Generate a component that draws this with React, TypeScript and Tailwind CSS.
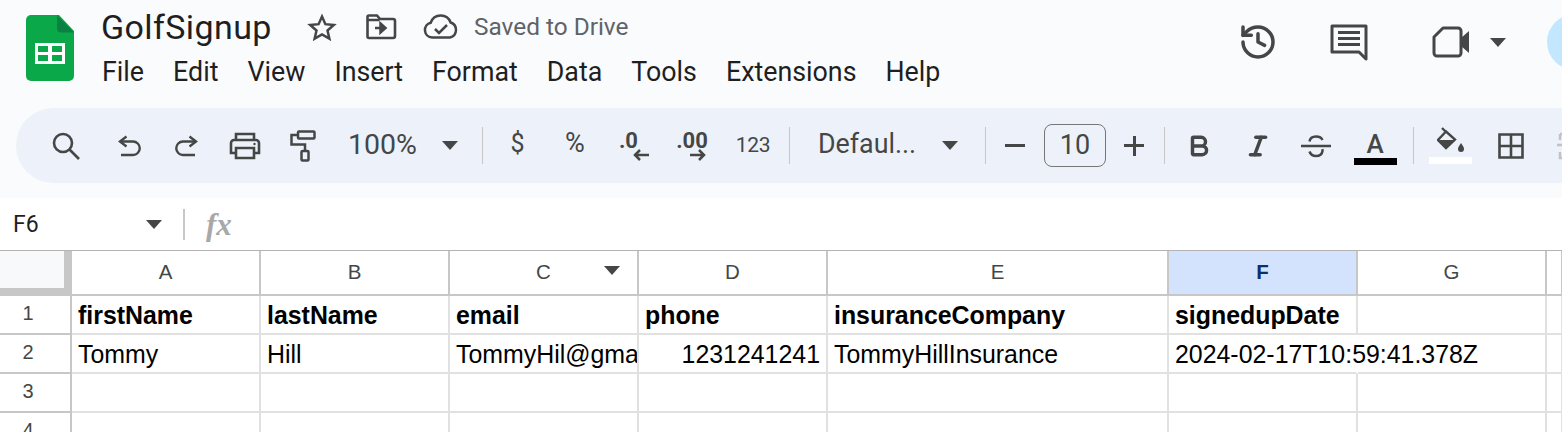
import React from 'react';
import { Bold, History, Italic } from 'lucide-react';

const Caret = ({ className = '' }: { className?: string }) => (
  <svg width="16" height="9" viewBox="0 0 16 9" className={className}><path d="M0 0h16L8 9z" fill="#444746" /></svg>
);

const Divider = ({ className = '' }: { className?: string }) => <div className={`w-[1px] h-[37px] bg-[#c7c7c7] shrink-0 ${className}`} />;

const SheetsLogo = () => (
  <svg width="48" height="66" viewBox="0 0 48 66">
    <path d="M5 0h28l15 16v45a5 5 0 0 1-5 5H5a5 5 0 0 1-5-5V5a5 5 0 0 1 5-5z" fill="#0ba84a" />
    <path d="M31 0l17 17.500H35a4 4 0 0 1-4-4z" fill="#0a8043" />
    <path d="M9 28h30v21H9zM12 31v6h10v-6zm14 0v6h10v-6zM12 40v6h10v-6zm14 0v6h10v-6z" fill="#fff" fillRule="evenodd" />
  </svg>
);

const StarIcon = () => (
  <svg width="30" height="28" viewBox="0 0 30 28" fill="none" stroke="#444746" strokeWidth="2.500">
    <path d="M15 3.500l3.400 7.700 8.400.8-6.300 5.500 1.900 8.200L15 21.400l-7.400 4.300 1.900-8.200L3.200 12l8.400-.8z" />
  </svg>
);

const FolderMove = () => (
  <svg width="32" height="26" viewBox="0 0 32 26" fill="none">
    <path d="M2.500 5.500V3a1.500 1.500 0 0 1 1.500-1.500h8l3 3.500h13a2 2 0 0 1 2 2v15a2 2 0 0 1-2 2H4a1.500 1.500 0 0 1-1.500-1.500z" stroke="#444746" strokeWidth="2.600" />
    <path d="M2.500 6h12" stroke="#444746" strokeWidth="2.500" />
    <path d="M10 14h8M15.500 9.500l5 4.500-5 4.500z" stroke="#444746" strokeWidth="2.500" fill="#444746" />
  </svg>
);

const CloudCheck = () => (
  <svg width="36" height="26" viewBox="0 0 36 26" fill="none" stroke="#444746" strokeWidth="2.500">
    <path d="M9 23.500a7.500 7.500 0 0 1-1.200-14.800A10.500 10.500 0 0 1 27.600 8.500 7.800 7.800 0 0 1 27 23.500z" />
    <path d="M12 15l4 4 8-8" />
  </svg>
);

const CommentIcon = () => (
  <svg width="38" height="38" viewBox="0 0 38 38" fill="none">
    <path d="M2 2h34v33l-7-7H2z" stroke="#444746" strokeWidth="3" strokeLinejoin="round" />
    <path d="M8 8.500h22M8 14.500h22M8 20.500h22" stroke="#444746" strokeWidth="3" />
  </svg>
);

const MeetIcon = () => (
  <svg width="38" height="32" viewBox="0 0 38 32" fill="none">
    <path d="M11 2h15a3 3 0 0 1 3 3v22a3 3 0 0 1-3 3H5a3 3 0 0 1-3-3V11z" stroke="#444746" strokeWidth="3" strokeLinejoin="round" />
    <path d="M29 12l8-7v22l-8-7z" fill="#444746" />
  </svg>
);

const SearchIcon = () => (
  <svg width="28" height="28" viewBox="0 0 28 28" fill="none" stroke="#444746" strokeWidth="2.600">
    <circle cx="11" cy="11" r="9" />
    <path d="M17.500 17.500L27 27" />
  </svg>
);

const UndoIcon = ({ flip = false }: { flip?: boolean }) => (
  <svg width="24" height="22" viewBox="0 0 24 22" fill="none" stroke="#444746" strokeWidth="2.400" className={flip ? '-scale-x-100' : ''}>
    <path d="M9.500 11.500L3 6.500 9.500 1.500" />
    <path d="M3 6.500h13a6 6 0 0 1 0 13.500H4" />
  </svg>
);

const PrintIcon = () => (
  <svg width="32" height="28" viewBox="0 0 32 28" fill="none" stroke="#444746" strokeWidth="2.600">
    <path d="M7 8V2h18v6" />
    <path d="M7 21H2V11a3 3 0 0 1 3-3h22a3 3 0 0 1 3 3v10h-5" />
    <path d="M7 16h18v10H7z" />
    <circle cx="25.500" cy="12" r="1.200" fill="#444746" stroke="none" />
  </svg>
);

const RollerIcon = () => (
  <svg width="26" height="32" viewBox="0 0 26 32" fill="none" stroke="#444746" strokeWidth="2.500">
    <rect x="8" y="1.500" width="16.500" height="7" rx="1" />
    <path d="M8 5H1.500v9.500H15V21" />
    <rect x="11.500" y="21" width="7" height="9.500" rx="1" />
  </svg>
);

const ArrowSmall = ({ left = false }: { left?: boolean }) => (
  <svg width="16" height="12" viewBox="0 0 16 12" fill="none" stroke="#444746" strokeWidth="2.500" className={left ? '-scale-x-100' : ''}>
    <path d="M0 6h14M9 1l5 5-5 5" />
  </svg>
);

const StrikeIcon = () => (
  <svg width="30" height="26" viewBox="0 0 30 26" fill="none" stroke="#444746" strokeWidth="2.500">
    <path d="M0 13h30" />
    <path d="M8.500 8.500C9 5 12 3.500 15 3.500s5.500 1 6.500 3.500" />
    <path d="M8.500 18.500C9.500 21.500 12 23 15 23s6-1.500 6.500-5c.1-.6 0-1.200-.2-1.800" />
  </svg>
);

const FillIcon = () => (
  <svg width="28" height="28" viewBox="0 0 28 28" fill="none">
    <path d="M5 1l4 4M9 4.500L1 13l8 8 9-8.500z" stroke="#444746" strokeWidth="2.400" />
    <path d="M2 13h15l-8 8z" fill="#444746" />
    <path d="M24 16c2 3 3 4.500 3 6a3 3 0 0 1-6 0c0-1.500 1-3 3-6z" fill="#444746" />
  </svg>
);

const BordersIcon = () => (
  <svg width="26" height="26" viewBox="0 0 26 26" fill="none" stroke="#444746" strokeWidth="2.600">
    <path d="M1.500 1.500h23v23h-23zM13 1.500v23M1.500 13h23" />
  </svg>
);

const MergeStub = () => (
  <svg width="12" height="28" viewBox="0 0 12 28" fill="none" stroke="#bfc2c7" strokeWidth="2.500">
    <path d="M3 2h9M3 2v6M3 20v6h9M0 13h12" />
  </svg>
);

const columns = ['A', 'B', 'C', 'D', 'E', 'F', 'G', ''];
const menus = ['File', 'Edit', 'View', 'Insert', 'Format', 'Data', 'Tools', 'Extensions', 'Help'];
const rows: { label: string; cells: string[]; bold?: boolean }[] = [
  { label: '1', bold: true, cells: ['firstName', 'lastName', 'email', 'phone', 'insuranceCompany', 'signedupDate', '', ''] },
  { label: '2', cells: ['Tommy', 'Hill', 'TommyHil@gmail.com', '1231241241', 'TommyHillInsurance', '2024-02-17T10:59:41.378Z', '', ''] },
  { label: '3', cells: ['', '', '', '', '', '', '', ''] },
  { label: '4', cells: ['', '', '', '', '', '', '', ''] },
];

const ToolBtn = ({ w, children }: { w: string; children: React.ReactNode }) => (
  <div className={`${w} shrink-0 flex items-center justify-center`}>{children}</div>
);

export default function App() {
  return (
    <div className="w-[1562px] h-[432px] overflow-hidden bg-[#f9fbfd] font-['Roboto',sans-serif]">
      {/* title bar */}
      <header className="h-[108px] flex items-start">
        <div className="w-[101px] shrink-0 pl-[26px] pt-[15px]"><SheetsLogo /></div>
        <div className="w-[1125px] shrink-0">
          <div className="h-[54px] flex items-center">
            <span className="w-[192px] text-[34px] tracking-[0.4px] leading-none text-[#1f1f1f]">GolfSignup</span>
            <div className="w-[58px] flex justify-center"><StarIcon /></div>
            <div className="w-[60px] flex justify-center"><FolderMove /></div>
            <div className="w-[60px] flex justify-center"><CloudCheck /></div>
            <span className="ml-[3px] text-[24.400px] leading-none text-[#5f6368]">Saved to Drive</span>
          </div>
          <nav className="flex gap-[29px] text-[26.800px] leading-none text-[#1f1f1f] pt-[5px] pl-[1px]">
            {menus.map(m => <span key={m}>{m}</span>)}
          </nav>
        </div>
        <div className="flex items-center h-[84px] shrink-0">
          <div className="w-[64px] flex justify-center"><History size={40} color="#444746" strokeWidth={2.100} /></div>
          <div className="w-[76px] ml-[21px] flex justify-center pt-[1px]"><CommentIcon /></div>
          <div className="w-[74px] ml-[27px] flex justify-center"><MeetIcon /></div>
          <Caret className="mr-[41px] ml-[2px]" />
          <div className="w-[56px] h-[56px] rounded-full bg-[#c2e7ff] shrink-0" />
        </div>
      </header>

      {/* toolbar pill */}
      <div className="ml-4 h-[75px] rounded-l-[38px] bg-[#edf2fa] flex items-center pl-[21px] text-[#444746] overflow-hidden">
        <ToolBtn w="w-[58px]"><SearchIcon /></ToolBtn>
        <ToolBtn w="w-[58px] ml-[5px]"><UndoIcon /></ToolBtn>
        <ToolBtn w="w-[58px]"><UndoIcon flip /></ToolBtn>
        <ToolBtn w="w-[58px]"><PrintIcon /></ToolBtn>
        <ToolBtn w="w-[58px]"><RollerIcon /></ToolBtn>
        <div className="w-[150px] shrink-0 flex items-center pl-[16px] text-[28.500px] leading-none">
          <span className="w-[94px]">100%</span>
          <Caret />
        </div>
        <Divider />
        <ToolBtn w="w-[61px] ml-[4px] text-[25px] pb-[4px]">$</ToolBtn>
        <ToolBtn w="w-[54px] text-[27px] pb-[4px]">%</ToolBtn>
        <div className="w-[60px] shrink-0 flex flex-col items-center pl-[3px]">
          <span className="text-[22px] leading-[20px] font-bold -ml-[10px]">.0</span>
          <div className="ml-[14px] h-[12px] -mt-[2px]"><ArrowSmall left /></div>
        </div>
        <div className="w-[60px] shrink-0 flex flex-col items-center">
          <span className="text-[22px] leading-[20px] font-bold">.00</span>
          <div className="ml-[12px] h-[12px] -mt-[2px]"><ArrowSmall /></div>
        </div>
        <ToolBtn w="w-[62px] text-[21px] tracking-[-0.3px]">123</ToolBtn>
        <Divider className="ml-[5px]" />
        <div className="w-[195px] shrink-0 flex items-center pl-[28px] text-[26.800px] leading-none pb-[3px]">
          <span className="w-[124px]">Defaul...</span>
          <Caret className="mt-[3px]" />
        </div>
        <Divider />
        <div className="w-[58px] shrink-0 flex justify-center"><div className="w-[20px] h-[3px] bg-[#444746]" /></div>
        <div className="w-[62px] h-[43px] shrink-0 border border-[#747775] rounded-[8px] flex items-center justify-center text-[27px] pb-[1px]">10</div>
        <div className="w-[58px] shrink-0 flex justify-center text-[#444746] pr-[2px]">
          <div className="relative w-[20px] h-[20px]">
            <div className="absolute left-0 top-[8.500px] w-[20px] h-[3px] bg-[#444746]" />
            <div className="absolute left-[8.500px] top-0 w-[3px] h-[20px] bg-[#444746]" />
          </div>
        </div>
        <Divider />
        <ToolBtn w="w-[68px]"><Bold size={26} strokeWidth={3.200} /></ToolBtn>
        <ToolBtn w="w-[50px]"><Italic size={26} strokeWidth={3.200} /></ToolBtn>
        <ToolBtn w="w-[66px]"><StrikeIcon /></ToolBtn>
        <div className="w-[52px] shrink-0 flex flex-col items-center pt-[4px]">
          <span className="text-[26px] leading-[27px] font-medium">A</span>
          <div className="w-[43px] h-[7px] bg-black" />
        </div>
        <Divider className="ml-[12px]" />
        <div className="w-[73px] shrink-0 flex flex-col items-center">
          <FillIcon />
          <div className="w-[43px] h-[7px] bg-white mt-[2px]" />
        </div>
        <ToolBtn w="w-[48px]"><BordersIcon /></ToolBtn>
        <div className="ml-[22px] shrink-0"><MergeStub /></div>
      </div>

      {/* name box + formula bar */}
      <div className="mt-[15px] h-[52px] bg-white flex items-center">
        <span className="w-[146px] shrink-0 pl-[13px] text-[23px] leading-none text-[#1f1f1f]">F6</span>
        <Caret className="mt-[1px]" />
        <div className="ml-[21px] w-[2px] h-[31px] bg-[#c7c7c7] shrink-0" />
        <span className="ml-[21px] font-['Liberation_Serif',serif] italic font-bold text-[31px] leading-none text-[#a8a8a8]">fx</span>
      </div>

      {/* grid */}
      <div className="bg-white border-t border-[#b3b3b3] grid grid-cols-[72px_189px_189px_189px_189px_341px_189px_189px_16px] grid-rows-[45px_39px_39px_39px_39px] font-['Liberation_Sans',sans-serif]">
        <div className="border-r-[8px] border-b-[8px] border-[#c7c7c7] bg-[#f8f9fa]" />
        {columns.map((c, i) => (
          <div
            key={i}
            className={`border-r-2 border-b-2 border-[#c7c7c7] flex items-center justify-center text-[20.500px] ${c === 'F' ? 'bg-[#d3e3fd] font-bold text-[#0b2f66]' : 'text-[#444746]'}`}
          >
            {c === 'C' ? (
              <div className="relative w-full text-center">
                C
                <Caret className="absolute right-[17px] top-[9px]" />
              </div>
            ) : c}
          </div>
        ))}
        {rows.map(r => (
          <React.Fragment key={r.label}>
            <div className="border-r-2 border-b-2 border-r-[#c7c7c7] border-b-[#c7c7c7] flex items-center justify-center pr-[14px] pb-[3px] text-[20px] text-[#444746]">{r.label}</div>
            {r.cells.map((cell, i) => (
              <div
                key={i}
                className={`border-r-2 border-b-2 border-[#e1e1e1] flex items-center whitespace-nowrap px-[6px] pt-[2px] text-[24.900px] text-black ${r.bold ? 'font-bold' : ''} ${cell === '1231241241' ? 'justify-end' : ''} ${i === 5 && cell.startsWith('2024') ? 'overflow-visible relative z-10 border-r-transparent' : 'overflow-hidden'}`}
              >
                {cell}
              </div>
            ))}
          </React.Fragment>
        ))}
      </div>
    </div>
  );
}
